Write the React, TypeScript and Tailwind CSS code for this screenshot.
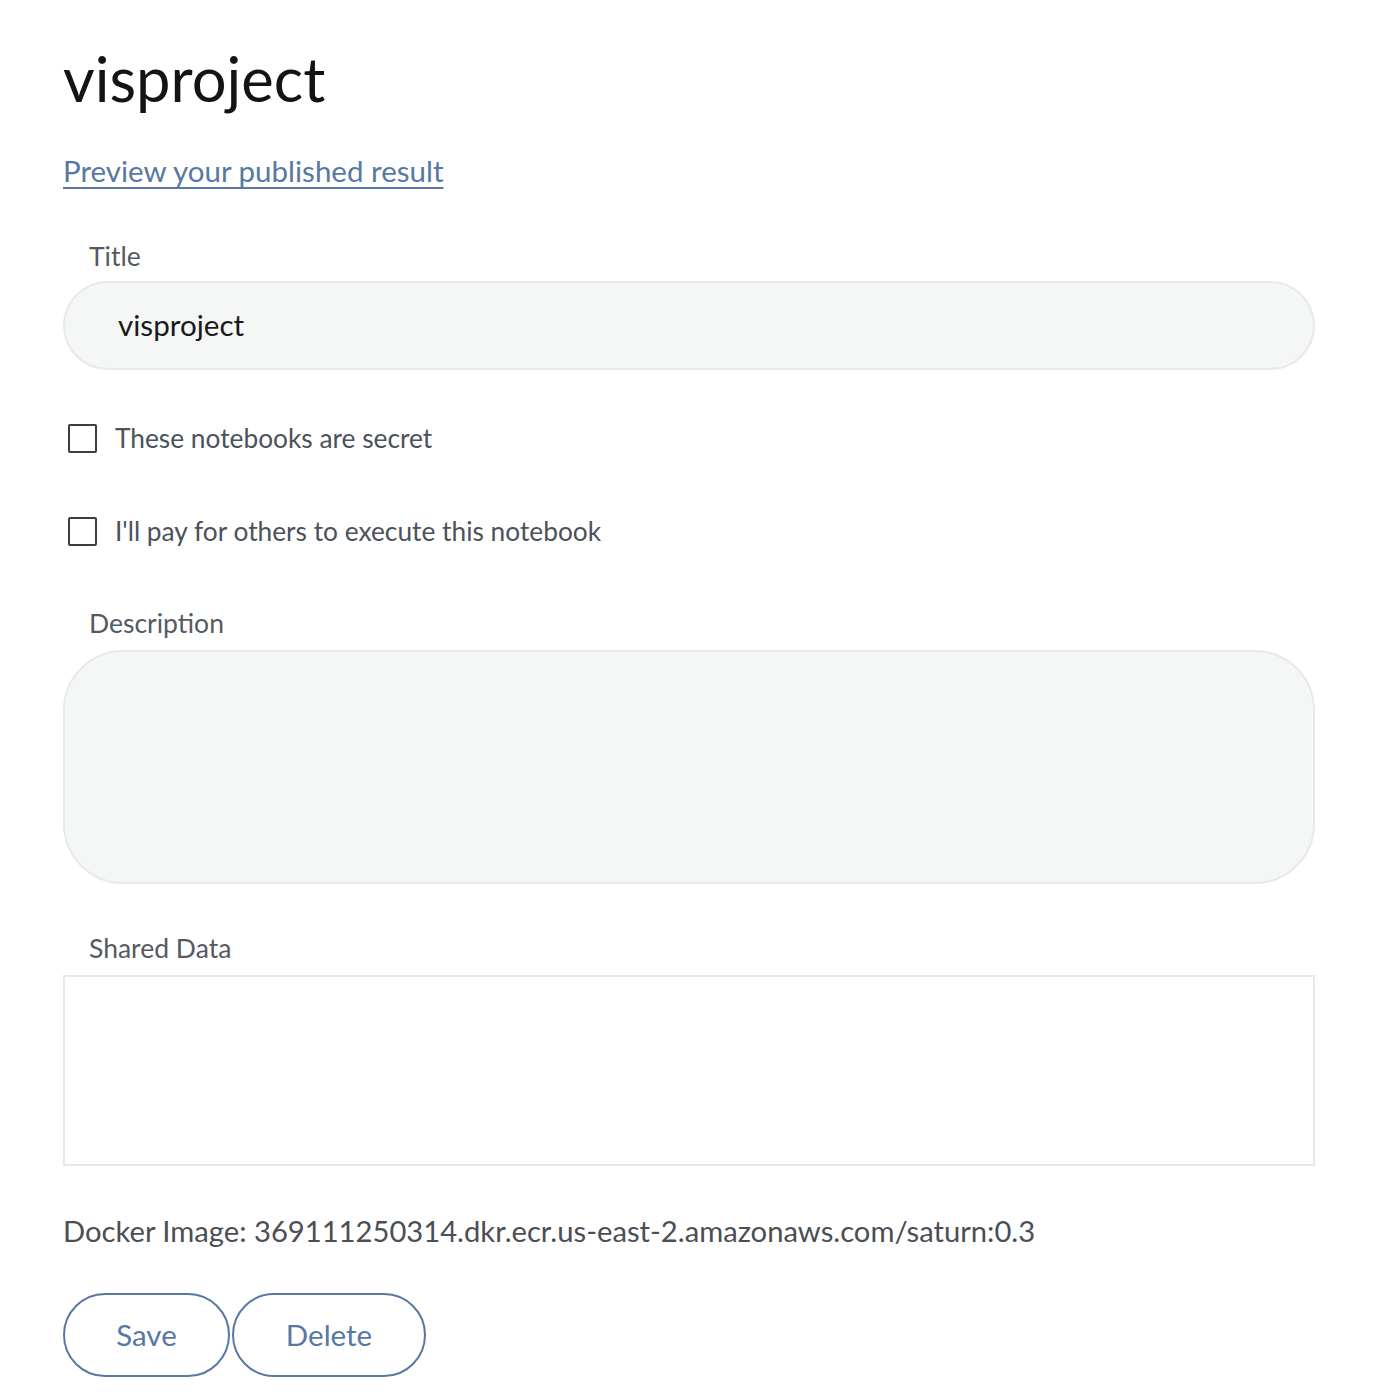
import React from 'react';

const font = { fontFamily: 'Lato, "Open Sans", sans-serif' };

const Checkbox: React.FC<{ label: string }> = ({ label }) => (
  <label className="flex h-[30px] items-center gap-[18px] pl-[5px]">
    <span className="block h-[29px] w-[29px] rounded-[2px] border-2 border-[#3a3d42] bg-white" />
    <span className="text-[26.3px] leading-[30px] text-[#4b525c]">{label}</span>
  </label>
);

const App: React.FC = () => {
  return (
    <div className="min-h-[1398px] w-[1400px] bg-white px-[63px] pt-[38px]" style={font}>
      <h1 className="text-[61.5px] leading-[80px] text-[#141414]">visproject</h1>

      <a href="#" className="mt-[33px] block w-fit text-[29.5px] leading-[40px] text-[#5878a3] underline decoration-[1.5px] underline-offset-[5px]">
        Preview your published result
      </a>

      <div className="mt-[48px]">
        <div className="pl-[26px] text-[26.5px] leading-[34px] text-[#555a5f]">Title</div>
        <div className="mt-[8px] flex h-[89px] w-[1252px] items-center rounded-full border-2 border-[#e8eaea] bg-[#f5f6f6] pl-[53px] text-[29.6px] text-[#1a1a1a]">
          visproject
        </div>
      </div>

      <div className="mt-[53px] flex flex-col gap-[63px]">
        <Checkbox label="These notebooks are secret" />
        <Checkbox label="I'll pay for others to execute this notebook" />
      </div>

      <div className="mt-[60px]">
        <div className="pl-[26px] text-[26.5px] leading-[34px] text-[#555a5f]">Description</div>
        <div className="mt-[10px] h-[234px] w-[1252px] rounded-[60px] border-2 border-[#e8eaea] bg-[#f5f6f6]" />
      </div>

      <div className="mt-[47px]">
        <div className="pl-[26px] text-[26.5px] leading-[34px] text-[#555a5f]">Shared Data</div>
        <div className="mt-[10px] h-[191px] w-[1252px] border-2 border-[#e8e8e8] bg-white" />
      </div>

      <div className="mt-[45px] text-[29.2px] leading-[40px] text-[#4a4f55]">
        Docker Image: 369111250314.dkr.ecr.us-east-2.amazonaws.com/saturn:0.3
      </div>

      <div className="mt-[42px] flex gap-[2px]">
        <button className="h-[84px] w-[167px] rounded-full border-2 border-[#5878a3] bg-white text-[29.5px] text-[#5878a3]">
          Save
        </button>
        <button className="h-[84px] w-[194px] rounded-full border-2 border-[#5878a3] bg-white text-[29.5px] text-[#5878a3]">
          Delete
        </button>
      </div>
    </div>
  );
};

export default App;
